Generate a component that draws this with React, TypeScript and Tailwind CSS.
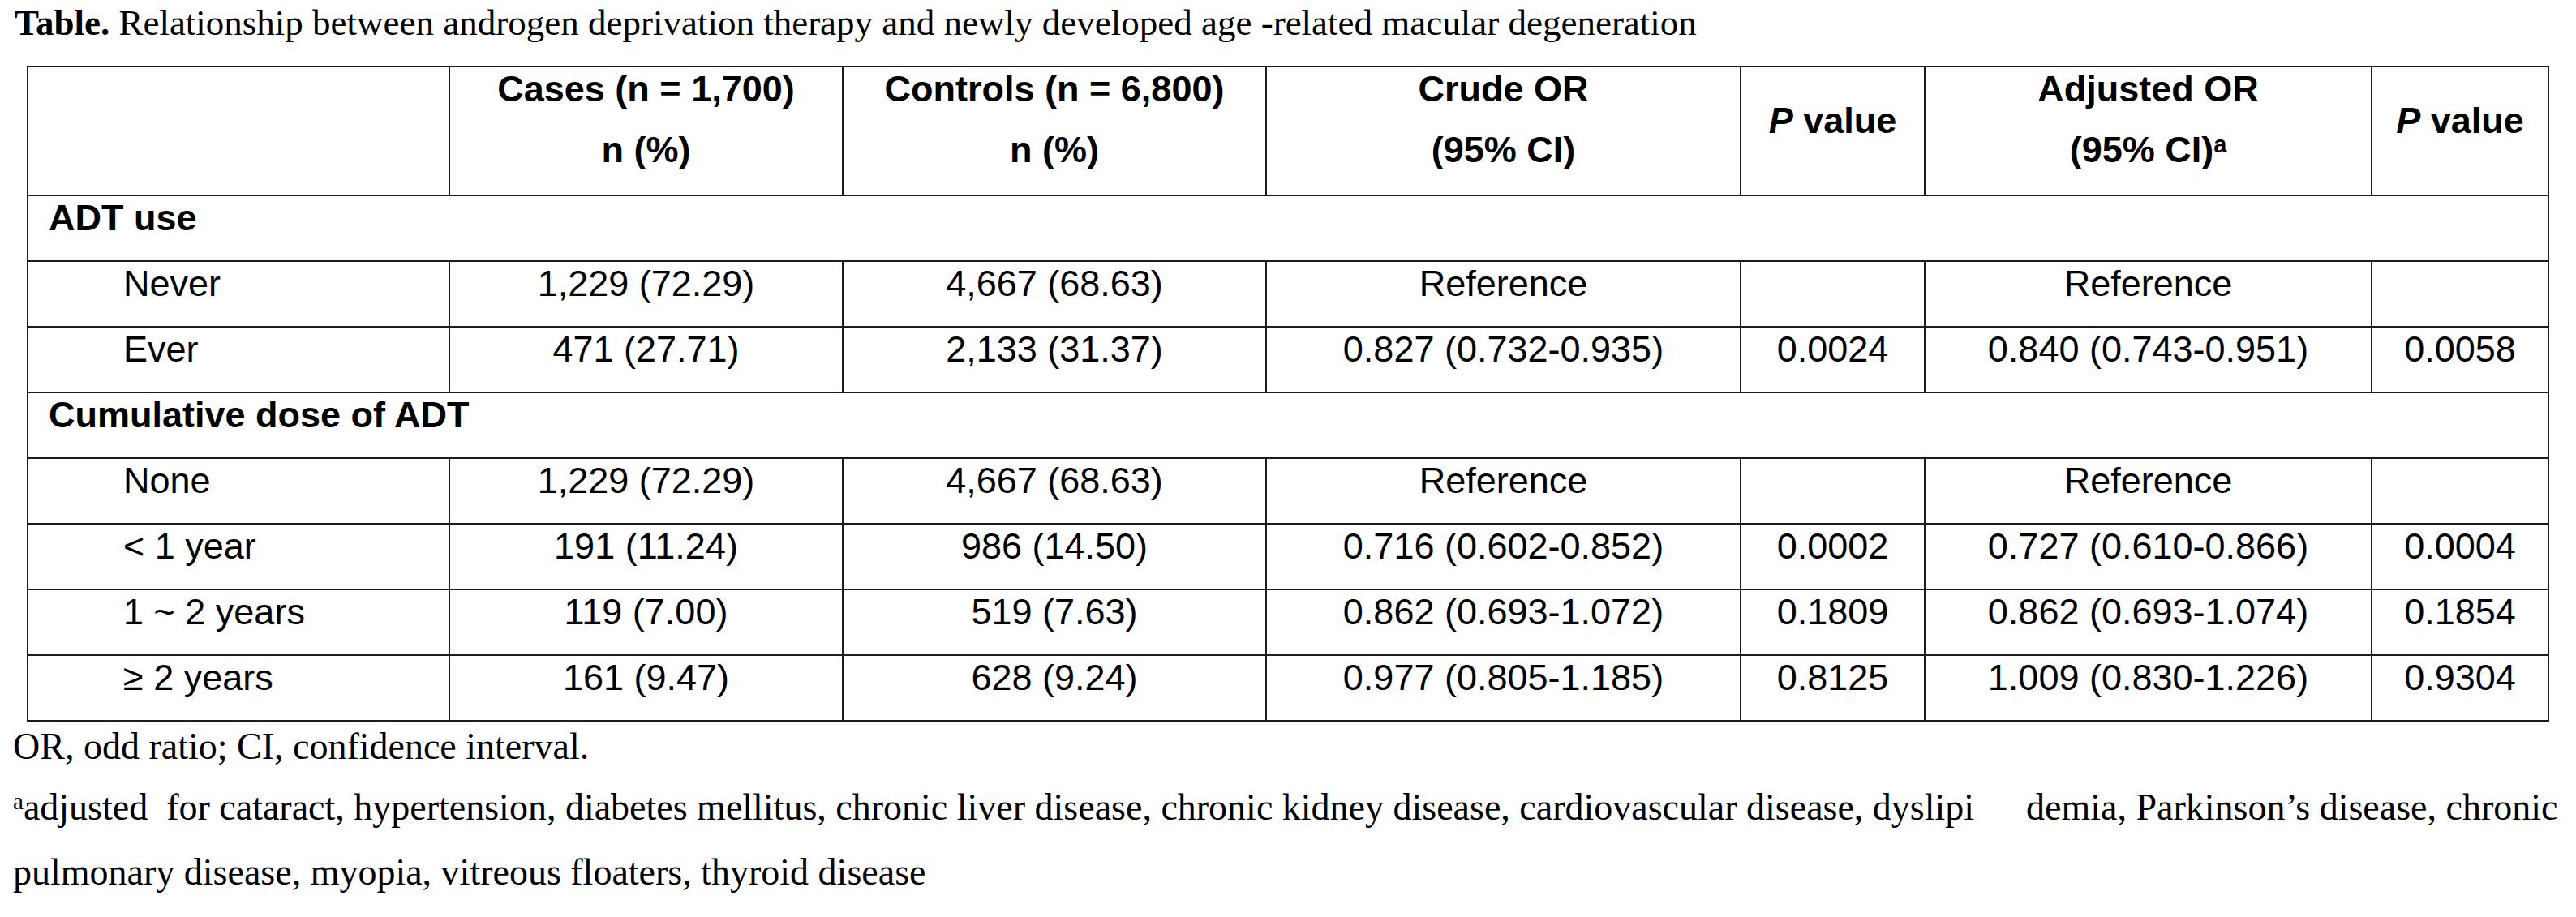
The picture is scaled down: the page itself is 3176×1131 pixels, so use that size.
import React from "react";

const sans = { fontFamily: '"Liberation Sans", Arial, sans-serif' } as const;
const serif = { fontFamily: '"Liberation Serif", "Times New Roman", serif' } as const;

type Row =
  | { kind: "section"; label: string }
  | { kind: "data"; cells: string[] };

const rows: Row[] = [
  { kind: "section", label: "ADT use" },
  { kind: "data", cells: ["Never", "1,229 (72.29)", "4,667 (68.63)", "Reference", "", "Reference", ""] },
  { kind: "data", cells: ["Ever", "471 (27.71)", "2,133 (31.37)", "0.827 (0.732-0.935)", "0.0024", "0.840 (0.743-0.951)", "0.0058"] },
  { kind: "section", label: "Cumulative dose of ADT" },
  { kind: "data", cells: ["None", "1,229 (72.29)", "4,667 (68.63)", "Reference", "", "Reference", ""] },
  { kind: "data", cells: ["< 1 year", "191 (11.24)", "986 (14.50)", "0.716 (0.602-0.852)", "0.0002", "0.727 (0.610-0.866)", "0.0004"] },
  { kind: "data", cells: ["1 ~ 2 years", "119 (7.00)", "519 (7.63)", "0.862 (0.693-1.072)", "0.1809", "0.862 (0.693-1.074)", "0.1854"] },
  { kind: "data", cells: ["≥ 2 years", "161 (9.47)", "628 (9.24)", "0.977 (0.805-1.185)", "0.8125", "1.009 (0.830-1.226)", "0.9304"] },
];

function HeadTwo({ a, b }: { a: React.ReactNode; b: React.ReactNode }) {
  return (
    <th className="border-2 border-[#1c1c1c] align-top pt-[1px] text-center font-bold">
      <div className="h-[75px] leading-[52px]">{a}</div>
      <div className="h-[77px] leading-[52px]">{b}</div>
    </th>
  );
}

function HeadP() {
  return (
    <th className="border-2 border-[#1c1c1c] align-middle text-center font-bold">
      <div className="leading-[52px] pb-[26px]">
        <span className="italic">P</span> value
      </div>
    </th>
  );
}

export default function App() {
  return (
    <div className="w-[3176px] h-[1131px] bg-white text-black overflow-hidden">
      <div className="pl-[18px] pt-[2px] text-[45px] leading-[52px] whitespace-nowrap" style={serif}>
        <span className="font-bold">Table.</span> Relationship between androgen deprivation therapy and newly developed age -related macular degeneration
      </div>

      <table
        className="ml-[33px] mt-[27px] w-[3108px] table-fixed border-collapse border-2 border-[#1c1c1c] text-[45px]"
        style={sans}
      >
        <colgroup>
          <col className="w-[520px]" />
          <col className="w-[485px]" />
          <col className="w-[522px]" />
          <col className="w-[585px]" />
          <col className="w-[227px]" />
          <col className="w-[551px]" />
          <col className="w-[218px]" />
        </colgroup>
        <thead>
          <tr className="h-[159px]">
            <th className="border-2 border-[#1c1c1c]"></th>
            <HeadTwo a="Cases (n = 1,700)" b="n (%)" />
            <HeadTwo a="Controls (n = 6,800)" b="n (%)" />
            <HeadTwo a="Crude OR" b="(95% CI)" />
            <HeadP />
            <HeadTwo
              a="Adjusted OR"
              b={
                <>
                  (95% CI)
                  <span className="text-[29px] leading-none align-[12px] font-bold">a</span>
                </>
              }
            />
            <HeadP />
          </tr>
        </thead>
        <tbody>
          {rows.map((r, i) =>
            r.kind === "section" ? (
              <tr key={i} className="h-[81px]">
                <td
                  colSpan={7}
                  className="border-2 border-[#1c1c1c] align-top pt-[2px] pl-[25px] leading-[50px] font-bold"
                >
                  {r.label}
                </td>
              </tr>
            ) : (
              <tr key={i} className="h-[81px]">
                {r.cells.map((c, j) => (
                  <td
                    key={j}
                    className={
                      j === 0
                        ? "border-2 border-[#1c1c1c] align-top pt-[2px] pl-[117px] leading-[50px] whitespace-nowrap"
                        : "border-2 border-[#1c1c1c] align-top pt-[2px] text-center leading-[50px] whitespace-nowrap"
                    }
                  >
                    {c}
                  </td>
                ))}
              </tr>
            )
          )}
        </tbody>
      </table>

      <div className="pl-[16px] w-[3141px] text-[46px]" style={serif}>
        <div className="leading-[62px] whitespace-nowrap">OR, odd ratio; CI, confidence interval.</div>
        <div className="mt-[4px] leading-[80px] whitespace-nowrap [text-align-last:justify] text-justify">
          <span className="text-[29px] leading-none align-[13px]">a</span>adjusted&nbsp; for cataract, hypertension, diabetes mellitus, chronic liver disease, chronic kidney disease, cardiovascular disease, dyslipi<span className="inline-block w-[64px]"></span>demia, Parkinson’s disease, chronic
        </div>
        <div className="leading-[80px] whitespace-nowrap">pulmonary disease, myopia, vitreous floaters, thyroid disease</div>
      </div>
    </div>
  );
}
